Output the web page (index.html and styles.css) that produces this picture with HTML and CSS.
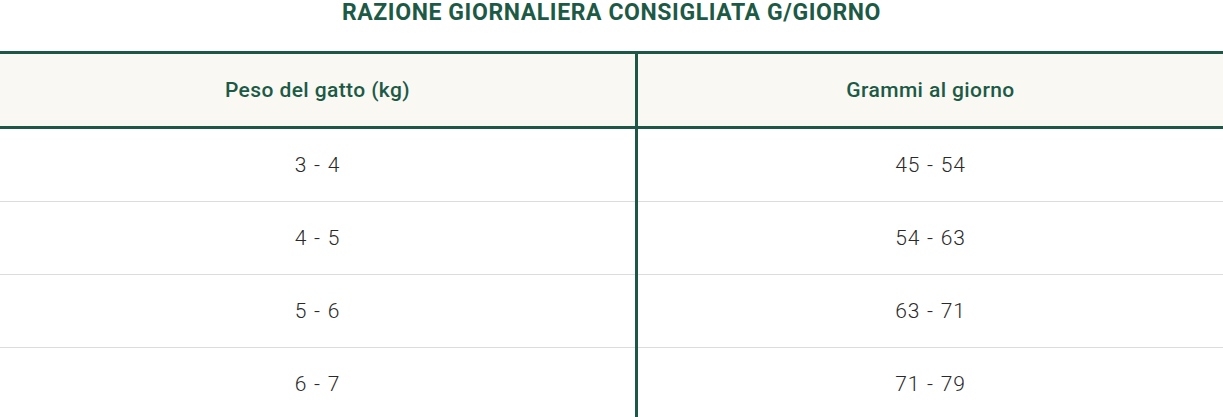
FILE: index.html
```html
<!DOCTYPE html>
<html lang="it">
<head>
<meta charset="utf-8">
<title>Razione giornaliera</title>
<link rel="stylesheet" href="styles.css">
</head>
<body>
<h2 class="title">RAZIONE GIORNALIERA CONSIGLIATA G/GIORNO</h2>
<table class="ration">
  <thead>
    <tr><th>Peso del gatto (kg)</th><th>Grammi al giorno</th></tr>
  </thead>
  <tbody>
    <tr><td>3 - 4</td><td>45 - 54</td></tr>
    <tr><td>4 - 5</td><td>54 - 63</td></tr>
    <tr><td>5 - 6</td><td>63 - 71</td></tr>
    <tr><td>6 - 7</td><td>71 - 79</td></tr>
  </tbody>
</table>
</body>
</html>
```
FILE: styles.css
```css
html, body {
  margin: 0;
  padding: 0;
  background: #ffffff;
}
body {
  font-family: "Roboto", "Liberation Sans", sans-serif;
  overflow: hidden;
}
.title {
  margin: 0;
  height: 51px;
  padding-top: 0;
  box-sizing: border-box;
  text-align: center;
  font-family: "Roboto", sans-serif;
  font-weight: 700;
  font-size: 23px;
  line-height: 26px;
  letter-spacing: 0.6px;
  color: #1d5a46;
}
.ration {
  width: 100%;
  border-collapse: collapse;
  table-layout: fixed;
}
.ration th {
  height: 72px;
  padding: 0;
  background: #f9f8f3;
  border-top: 3px solid #1f5747;
  border-bottom: 3px solid #1f5747;
  font-weight: 500;
  font-size: 21px;
  letter-spacing: 0.4px;
  color: #1d5a46;
  text-align: center;
}
.ration td {
  height: 72px;
  padding: 0;
  border-bottom: 1px solid #dcdcdc;
  font-size: 21px;
  font-weight: 300;
  letter-spacing: 0.8px;
  word-spacing: 1px;
  color: #2a2a2a;
  text-align: center;
}
.ration th:first-child,
.ration td:first-child {
  width: 635px;
  border-right: 3px solid #1f5747;
}
```
